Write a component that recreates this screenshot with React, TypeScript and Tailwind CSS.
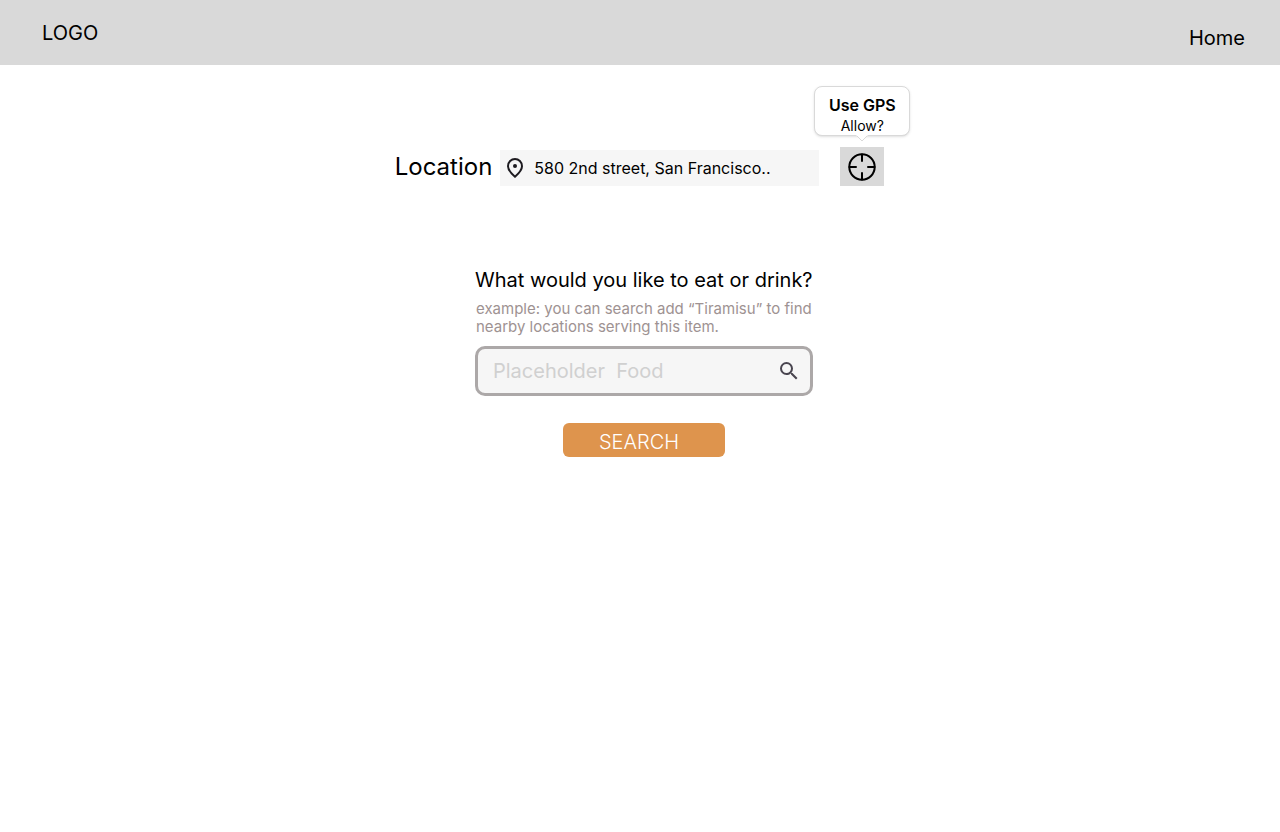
import { MdSearch } from "react-icons/md";

function PinIcon() {
  return (
    <svg viewBox="0 0 24 24" className="size-6 shrink-0" fill="none" aria-hidden="true">
      <path
        d="M12 20.7C7.3 16.6 5 13.200 5 10.200C5 5.900 8.300 3 12 3s7 2.900 7 7.200c0 3-2.300 6.400-7 10.500z"
        stroke="#1d1b20"
        strokeWidth="2"
      />
      <circle cx="12" cy="10" r="2" fill="#1d1b20" />
    </svg>
  );
}

function CrosshairIcon() {
  return (
    <svg
      viewBox="0 0 30 30"
      className="size-[30px]"
      fill="none"
      stroke="#000"
      strokeWidth="2"
      strokeLinecap="round"
      aria-hidden="true"
    >
      <circle cx="15" cy="15" r="12.7" />
      <path d="M15 2.500V9M15 21v6.500M2.500 15H9M21 15h6.500" />
    </svg>
  );
}

function GpsTooltip() {
  return (
    <div
      role="tooltip"
      className="absolute bottom-full left-1/2 mb-[11px] flex h-[50px] w-24 -translate-x-1/2 flex-col items-center rounded-lg border border-[#d9d9d9] bg-white pt-2 shadow-sm"
    >
      <strong className="text-base leading-5 font-semibold">Use GPS</strong>
      <span className="text-sm leading-[22px]">Allow?</span>
      <svg viewBox="0 0 14 7" className="absolute top-full left-1/2 h-[7px] w-[14px] -translate-x-1/2" aria-hidden="true">
        <path d="M1 0L7 6L13 0" fill="#fff" stroke="#d9d9d9" />
        <path d="M1 0H13" stroke="#fff" />
      </svg>
    </div>
  );
}

export default function App() {
  return (
    <div className="min-h-screen bg-white font-[Inter,sans-serif] text-black">
      <header className="flex h-[65px] items-start justify-between bg-[#d9d9d9] pr-[35px] pl-[42px] text-xl leading-6">
        <span className="pt-[21px]">LOGO</span>
        <a href="#home" className="pt-[26px]">
          Home
        </a>
      </header>

      <main className="flex flex-col items-center pt-[82px]">
        <div className="mr-px flex items-end">
          <label htmlFor="location" className="mr-2 self-center text-2xl">
            Location
          </label>
          <div className="mr-[21px] flex h-9 w-[319px] items-center gap-[7px] bg-[#f6f6f6] pl-[3px]">
            <PinIcon />
            <input
              id="location"
              type="text"
              defaultValue="580 2nd street, San Francisco.."
              className="min-w-0 flex-1 bg-transparent text-base leading-5 outline-none"
            />
          </div>
          <div className="relative">
            <button
              type="button"
              aria-label="Use GPS"
              className="flex h-[39px] w-11 items-center justify-center bg-[#d9d9d9]"
            >
              <CrosshairIcon />
            </button>
            <GpsTooltip />
          </div>
        </div>

        <form className="mt-20 ml-2 flex w-[338px] flex-col" onSubmit={(e) => e.preventDefault()}>
          <label htmlFor="food" className="text-xl whitespace-nowrap">
            What would you like to eat or drink?
          </label>
          <p className="mt-1.5 pl-px text-[15px] leading-[18px] text-[#9e9292]">
            example: you can search add “Tiramisu” to find nearby locations serving this item.
          </p>
          <div className="mt-2.5 flex h-[50px] items-center rounded-[10px] border-3 border-[#aca8a8] bg-[#f6f6f6] pr-[9px] pl-[15px]">
            <input
              id="food"
              type="text"
              placeholder="Placeholder  Food"
              className="min-w-0 flex-1 bg-transparent text-xl outline-none placeholder:text-[#d0d0d0]"
            />
            <MdSearch className="size-6 shrink-0 text-[#49454f]" />
          </div>
          <button
            type="submit"
            className="mt-[27px] h-[34px] w-[162px] self-center rounded-md bg-[#de944d] pt-1 pr-[10px] text-xl leading-6 font-light text-white"
          >
            SEARCH
          </button>
        </form>
      </main>
    </div>
  );
}
